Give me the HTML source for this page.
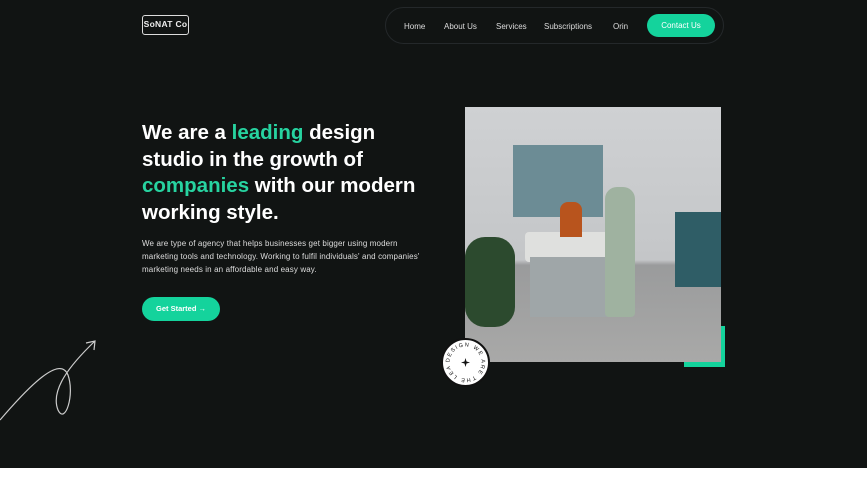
<!DOCTYPE html><html><head><style>
*{margin:0;padding:0;box-sizing:border-box}
body{width:867px;height:477px;background:#fff;font-family:"Liberation Sans",sans-serif;overflow:hidden;position:relative}
.bg{position:absolute;left:0;top:0;width:867px;height:468px;background:#111413}
.logo{position:absolute;left:142px;top:15px;width:47px;height:20px;border:1.5px solid #ddd;border-radius:3px;color:#eee;font-size:8.5px;font-weight:bold;text-align:center;line-height:17px;letter-spacing:.3px;white-space:nowrap}
.nav{position:absolute;left:385px;top:7px;width:339px;height:37px;border:1px solid #24282a;border-radius:19px}
.nav span{position:absolute;top:14px;color:#ddd;font-size:8px}
.cta{position:absolute;left:647px;top:14px;width:68px;height:23px;border-radius:12px;background:#14d39c;color:#fff;font-size:8px;text-align:center;line-height:23px}
h1{position:absolute;left:142px;top:120px;width:300px;color:#fff;font-size:20.5px;line-height:26.5px;font-weight:bold}
h1 b{color:#27d3a0}
p{position:absolute;left:142px;top:237px;color:#ddd;font-size:8px;letter-spacing:.12px;line-height:13px;white-space:nowrap}
.btn{position:absolute;left:142px;top:297px;width:78px;height:24px;border-radius:12px;background:#14d39c;color:#fff;font-size:7.5px;font-weight:bold;text-align:center;line-height:24px}
.br{position:absolute;left:684px;top:326px;width:41px;height:41px;background:#14d39c}
.img{position:absolute;left:465px;top:107px;width:256px;height:255px;overflow:hidden;background:linear-gradient(#cfd1d3 0%,#c4c6c8 60%,#9a9b9c 62%,#a9a9a8 100%)}
.badge{position:absolute;left:441px;top:338px;width:49px;height:49px;border-radius:50%;background:#fff;border:2px solid #111}
</style></head><body>
<div class="bg"></div>
<div class="logo">SoNAT Co</div>
<div class="nav">
<span style="left:18px">Home</span><span style="left:58px">About Us</span><span style="left:110px">Services</span><span style="left:158px">Subscriptions</span><span style="left:227px">Orin</span>
</div>
<div class="cta">Contact Us</div>
<h1>We are a <b>leading</b> design studio in the growth of <b>companies</b> with our modern working style.</h1>
<p>We are type of agency that helps businesses get bigger using modern<br>marketing tools and technology. Working to fulfil individuals' and companies'<br>marketing needs in an affordable and easy way.</p>
<div class="btn">Get Started →</div>
<div class="br"></div>
<div class="img">
<div style="position:absolute;left:48px;top:38px;width:90px;height:72px;background:#6c8c95"></div>
<div style="position:absolute;left:210px;top:105px;width:46px;height:75px;background:#2f5d66"></div>
<div style="position:absolute;left:60px;top:125px;width:110px;height:30px;background:#dfe0de;border-radius:4px"></div>
<div style="position:absolute;left:65px;top:150px;width:100px;height:60px;background:#9fa6a8"></div>
<div style="position:absolute;left:95px;top:95px;width:22px;height:35px;background:#b8541d;border-radius:8px 8px 0 0"></div>
<div style="position:absolute;left:140px;top:80px;width:30px;height:130px;background:#9fb2a0;border-radius:12px 12px 4px 4px"></div>
<div style="position:absolute;left:0;top:130px;width:50px;height:90px;background:#2c4a2e;border-radius:20px"></div>
</div>
<div class="badge"><svg width="45" height="45" viewBox="0 0 45 45"><defs><path id="c" d="M22.5 22.5 m-16 0 a16 16 0 1 1 32 0 a16 16 0 1 1 -32 0"/></defs><text font-size="5.5" fill="#111" font-family="Liberation Sans" letter-spacing="1.4"><textPath href="#c">DESIGN WE ARE THE LEADING</textPath></text><path d="M22.5 18 L23.5 21.5 L27 22.5 L23.5 23.5 L22.5 27 L21.5 23.5 L18 22.5 L21.5 21.5Z" fill="#111"/></svg></div>
<svg style="position:absolute;left:0;top:335px" width="110" height="90"><path d="M0 85 C30 50 60 20 68 40 C75 60 65 90 58 75 C50 55 70 30 95 6 M86 8 L95 6 L94 15" fill="none" stroke="#ccc" stroke-width="1.2"/></svg>
</body></html>
